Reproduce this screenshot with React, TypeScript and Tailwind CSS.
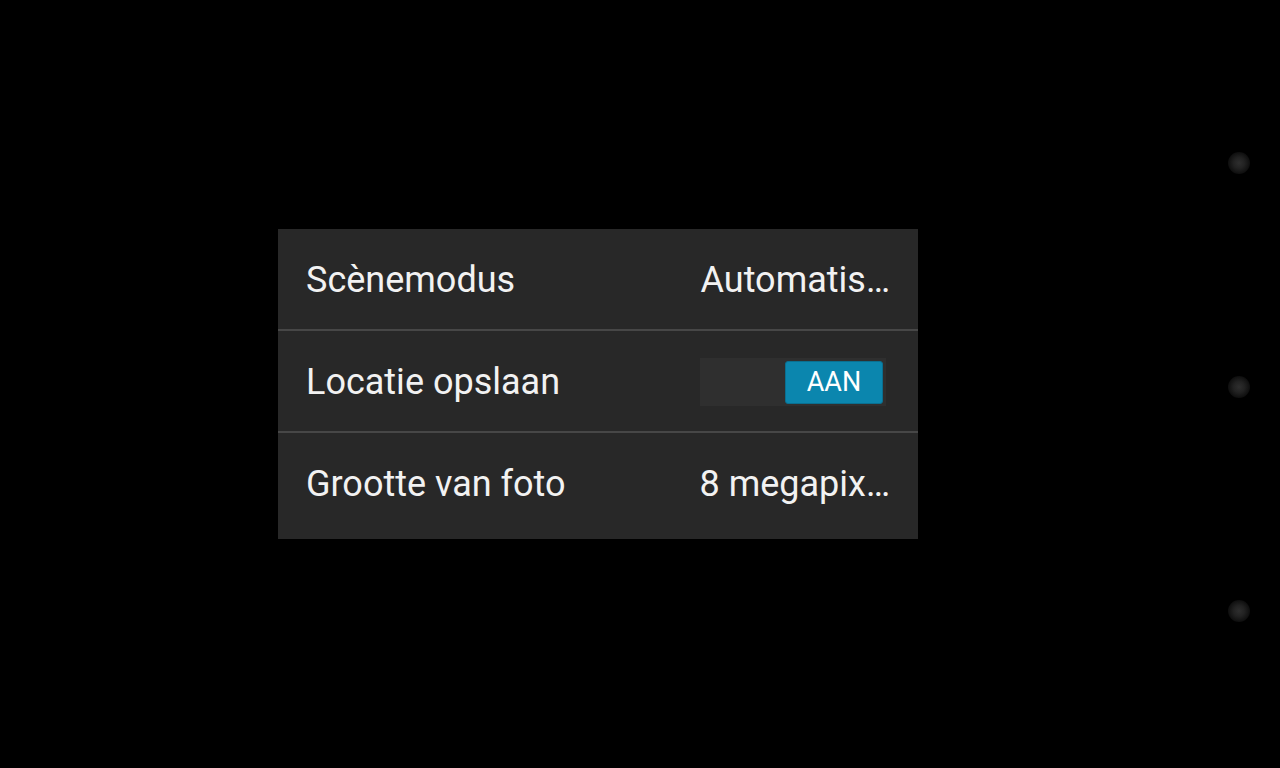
import React from 'react';

const rows = [
  { label: 'Scènemodus', value: 'Automatis…' },
  { label: 'Locatie opslaan', toggle: true },
  { label: 'Grootte van foto', value: '8 megapix…' },
];

const Dot = () => (
  <div className="w-[22px] h-[22px] rounded-full bg-[radial-gradient(circle,#2e2e2e_0%,#222222_35%,#0e0e0e_70%,#000000_100%)]" />
);

export default function App() {
  return (
    <div className="flex h-[768px] w-full bg-black font-['Roboto',sans-serif] text-[#f2f2f2]">
      <div className="flex-1 pl-[278px] pt-[229px]">
        <div className="w-[640px] bg-[#282828]">
          {rows.map((row, i) => (
            <div key={row.label}>
              {i > 0 && <div className="h-[2px] bg-[#474747]" />}
              <div
                className={`flex items-center justify-between pl-[28px] pr-[28px] ${
                  i === 2 ? 'h-[106px] pb-[4px]' : 'h-[100px] pt-[2px]'
                }`}
              >
                <span className="text-[36px] leading-none">{row.label}</span>
                {row.toggle ? (
                  <div className="mr-[4px] flex h-[48px] w-[186px] items-center justify-end bg-[#2f2f2f] pr-[3px]">
                    <div className="flex h-[43px] w-[98px] items-center justify-center rounded-[3px] border border-[#0a6f90] bg-[#0b86ae] text-[27px] leading-none text-white">
                      AAN
                    </div>
                  </div>
                ) : (
                  <span className="text-[36px] leading-none">{row.value}</span>
                )}
              </div>
            </div>
          ))}
        </div>
      </div>
      <div className="flex w-[82px] flex-col items-center gap-[202px] pt-[152px]">
        <Dot />
        <Dot />
        <Dot />
      </div>
    </div>
  );
}
